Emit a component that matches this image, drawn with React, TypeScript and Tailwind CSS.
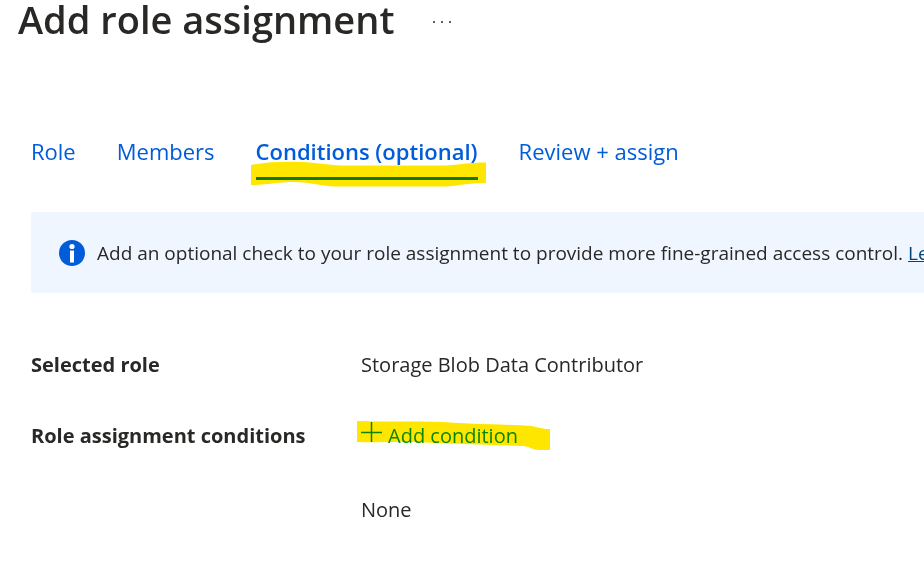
import type { ReactNode } from "react";

const tabs = ["Role", "Members", "Conditions (optional)", "Review + assign"];
const activeTab = "Conditions (optional)";

function TabHighlight() {
  return (
    <svg
      aria-hidden="true"
      viewBox="0 0 236 27"
      className="pointer-events-none absolute -left-[5px] top-[25px] h-[27px] w-[236px] mix-blend-multiply"
    >
      <path
        d="M0 4C15 1 32 0.500 51 1C66 1.500 75 4 91 4.500L193 4.500C210 4 217 1.500 235 1.500V22C215 22 208 25 194 25.500L83 25.500C66 24 56 21 43 21C27 21 16 24 0 24Z"
        fill="#ffe600"
      />
    </svg>
  );
}

function ConditionHighlight() {
  return (
    <svg
      aria-hidden="true"
      viewBox="0 0 194 31"
      className="pointer-events-none absolute -left-1 -top-px h-[31px] w-[194px] mix-blend-multiply"
    >
      <path
        d="M0 1C25 2 58 1 86 2C108 4 142 4 175 6C181 7 184 9 193 9V30H182C176 30 174 27 166 26C136 25 104 24 77 23C49 21 26 23 0 22Z"
        fill="#ffe600"
      />
    </svg>
  );
}

function Field({ label, children }: { label: string; children: ReactNode }) {
  return (
    <div className="flex">
      <dt className="w-[330px] shrink-0 font-bold">{label}</dt>
      <dd>{children}</dd>
    </div>
  );
}

export default function App() {
  return (
    <main className="overflow-x-hidden bg-white font-['Open_Sans','Noto_Sans',sans-serif] text-[20px] leading-[30px] text-[#292827]">
      <header className="flex h-[38px] items-center gap-[38px] pl-[18px]">
        <h1 className="text-[38px] font-semibold leading-[38px]">Add role assignment</h1>
        <button type="button" aria-label="More actions" className="flex h-8 items-end pb-[11px]">
          <svg viewBox="0 0 20 4" className="h-1 w-5" fill="#292827">
            <circle cx="2" cy="2" r="1" />
            <circle cx="10" cy="2" r="1" />
            <circle cx="18" cy="2" r="1" />
          </svg>
        </button>
      </header>

      <nav className="mt-[98px] flex gap-[41px] pl-[31px] text-[22px] leading-[30px] text-[#015cda]">
        {tabs.map((tab) =>
          tab === activeTab ? (
            <div key={tab} className="relative">
              <button
                type="button"
                aria-current="page"
                className="block whitespace-nowrap border-b-3 border-[#118800] pb-[11px] font-semibold"
              >
                {tab}
              </button>
              <TabHighlight />
            </div>
          ) : (
            <button key={tab} type="button" className="self-start whitespace-nowrap">
              {tab}
            </button>
          ),
        )}
      </nav>

      <section className="ml-[31px] mt-8 flex h-[81px] items-center gap-3 rounded-l-[3px] bg-[#eff6ff] pl-7">
        <svg aria-hidden="true" viewBox="0 0 26 26" className="h-[26px] w-[26px] shrink-0">
          <circle cx="13" cy="13" r="13" fill="#015cda" />
          <circle cx="13" cy="6.500" r="2.600" fill="#fff" />
          <path d="M11 10.500h4v12h-4z" fill="#fff" />
        </svg>
        <p className="whitespace-nowrap text-[19px]">
          Add an optional check to your role assignment to provide more fine-grained access control.{" "}
          <a href="#learn-more" className="text-[#004578] underline">
            Learn more
          </a>
        </p>
      </section>

      <dl className="mt-[57px] flex flex-col gap-[41px] pl-[31px]">
        <Field label="Selected role">Storage Blob Data Contributor</Field>
        <Field label="Role assignment conditions">
          <div className="relative">
            <button type="button" className="flex items-center gap-[6px] text-[#0c9400]">
              <svg aria-hidden="true" viewBox="0 0 21 30" className="h-[30px] w-[21px]" stroke="#0c9400" strokeWidth="1.500">
                <path d="M0 11.500h21M10.500 1v20" />
              </svg>
              Add condition
            </button>
            <ConditionHighlight />
          </div>
          <p className="mt-11">None</p>
        </Field>
      </dl>
    </main>
  );
}
